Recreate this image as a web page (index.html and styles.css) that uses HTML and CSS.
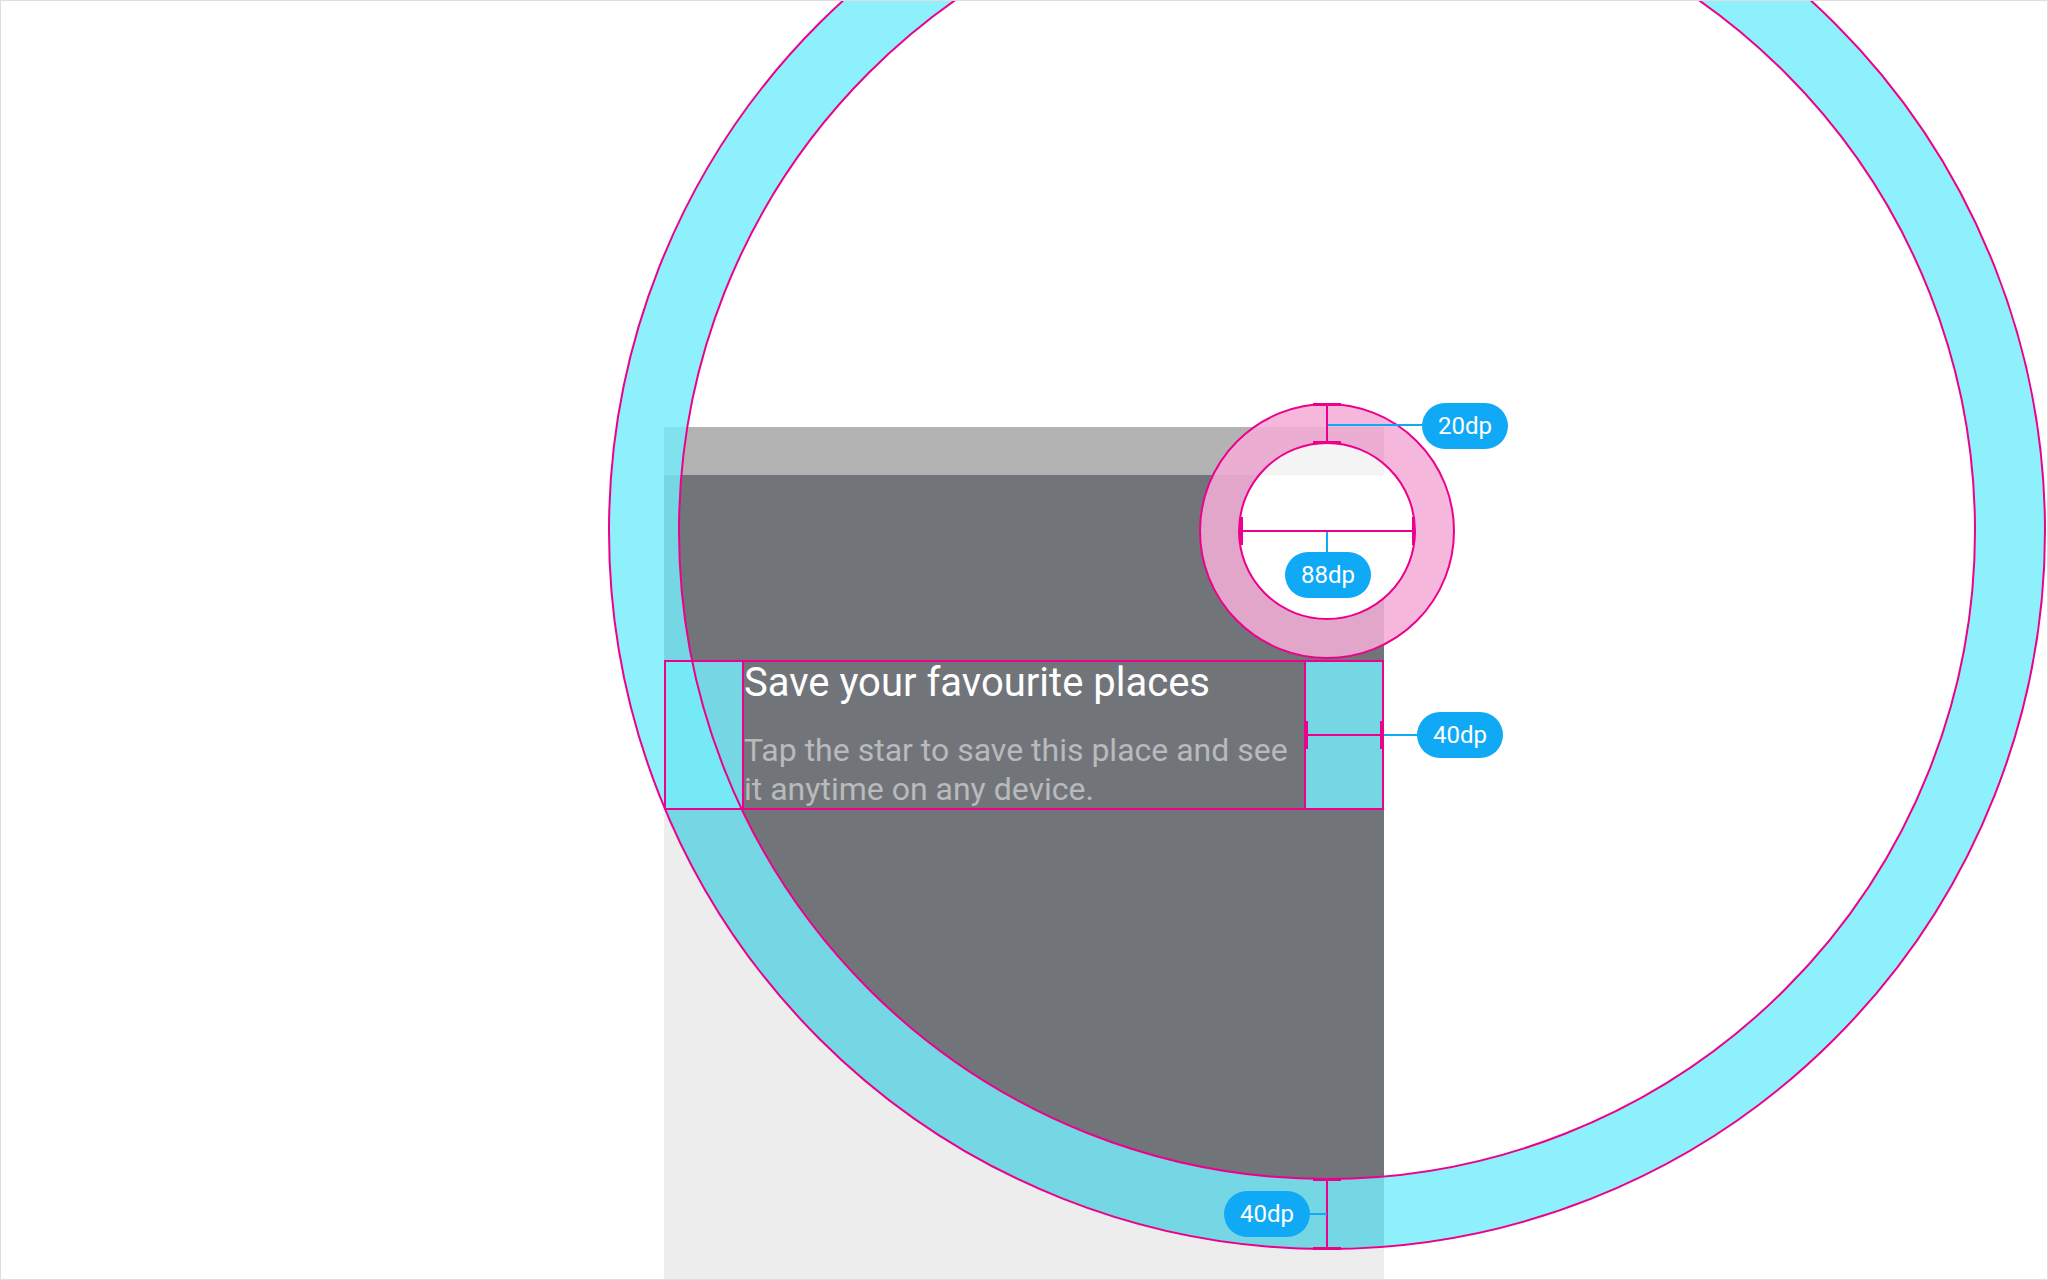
FILE: index.html
```html
<!DOCTYPE html>
<html>
<head>
    <title>Feature discovery - measurements</title>
    <link rel="stylesheet" href="styles.css">
</head>
<body>
    <div class="canvas">
        <div class="phone">
            <div class="status-bar"></div>
            <div class="coach">
                <h2 class="coach-title">Save your favourite places</h2>
                <p class="coach-body">Tap the star to save this place and see it anytime on any device.</p>
            </div>
        </div>

        <svg class="diagram" width="2048" height="1280" viewBox="0 0 2048 1280">
            <defs>
                <clipPath id="screenBody">
                    <rect x="664" y="475" width="720" height="805"/>
                </clipPath>
                <clipPath id="statusInTarget">
                    <circle cx="1327" cy="531" r="88"/>
                </clipPath>
            </defs>

            <!-- scrim / outer circle on the screen -->
            <circle cx="1327" cy="531" r="718" fill="#717579" clip-path="url(#screenBody)"/>

            <!-- target -->
            <circle cx="1327" cy="531" r="88" fill="#fff"/>
            <rect x="1239" y="427" width="145" height="48" fill="#f4f4f4" clip-path="url(#statusInTarget)"/>

            <!-- 40dp padding ring -->
            <path fill="rgba(117,237,250,0.82)" fill-rule="evenodd"
                d="M609 531a718 718 0 1 0 1436 0a718 718 0 1 0 -1436 0Z M679 531a648 648 0 1 0 1296 0a648 648 0 1 0 -1296 0Z"/>
            <!-- 20dp target ring -->
            <path fill="rgba(244,173,215,0.87)" fill-rule="evenodd"
                d="M1200 531a127 127 0 1 0 254 0a127 127 0 1 0 -254 0Z M1239 531a88 88 0 1 0 176 0a88 88 0 1 0 -176 0Z"/>

            <!-- text padding boxes -->
            <rect x="664" y="660" width="80" height="150" fill="rgba(117,237,250,0.82)"/>
            <rect x="1304" y="660" width="80" height="150" fill="rgba(117,237,250,0.82)"/>

            <g fill="none" stroke="#ec008c" stroke-width="2">
                <circle cx="1327" cy="531" r="718"/>
                <circle cx="1327" cy="531" r="648"/>
                <circle cx="1327" cy="531" r="127"/>
                <circle cx="1327" cy="531" r="88"/>
                <rect x="665" y="661" width="718" height="148"/>
                <line x1="743" y1="660" x2="743" y2="810"/>
                <line x1="1305" y1="660" x2="1305" y2="810"/>

                <line x1="1327" y1="405" x2="1327" y2="443"/>
                <line x1="1240" y1="531" x2="1414" y2="531"/>
                <line x1="1305" y1="735" x2="1383" y2="735"/>
                <line x1="1327" y1="1179" x2="1327" y2="1248"/>
            </g>

            <!-- end caps -->
            <g fill="#ec008c">
                <rect x="1313" y="403" width="28" height="3"/>
                <rect x="1313" y="441" width="28" height="3"/>
                <rect x="1240" y="517" width="3" height="28"/>
                <rect x="1412" y="517" width="3" height="28"/>
                <rect x="1305" y="721" width="3" height="28"/>
                <rect x="1380" y="721" width="3" height="28"/>
                <rect x="1313" y="1178" width="28" height="3"/>
                <rect x="1313" y="1247" width="28" height="3"/>
            </g>

            <g stroke="#10a9f6" stroke-width="2">
                <line x1="1328" y1="425" x2="1424" y2="425"/>
                <line x1="1327" y1="532" x2="1327" y2="554"/>
                <line x1="1384" y1="735" x2="1419" y2="735"/>
                <line x1="1307" y1="1214" x2="1327" y2="1214"/>
            </g>
        </svg>

        <span class="tag tag-ring">20dp</span>
        <span class="tag tag-target">88dp</span>
        <span class="tag tag-side">40dp</span>
        <span class="tag tag-bottom">40dp</span>
    </div>
</body>
</html>
```

FILE: styles.css
```css
body {
    margin: 0;
    background-color: #fff;
    font-family: Roboto, 'Noto Sans', sans-serif;
}
.canvas {
    position: relative;
    width: 2048px;
    height: 1280px;
    padding-top: 427px;
    box-sizing: border-box;
    overflow: hidden;
    background: #fff;
}
.canvas::after {
    content: '';
    position: absolute;
    top: 0;
    left: 0;
    right: 0;
    bottom: 0;
    border: 1px solid #dedede;
    z-index: 5;
    pointer-events: none;
}
.phone {
    width: 720px;
    height: 853px;
    margin-left: 664px;
    background-color: #ededed;
}
.status-bar {
    height: 48px;
    background-color: #b3b3b3;
}
.coach {
    position: relative;
    z-index: 2;
    height: 150px;
    margin-top: 185px;
    padding: 0 80px;
    box-sizing: border-box;
}
.coach-title {
    margin: 0;
    font-size: 40px;
    line-height: 46px;
    font-weight: 400;
    color: #fff;
}
.coach-body {
    margin: 25px 0 0;
    font-size: 32px;
    line-height: 39px;
    color: rgba(255, 255, 255, 0.5);
}
.diagram {
    position: absolute;
    top: 0;
    left: 0;
    z-index: 1;
}
.tag {
    position: absolute;
    z-index: 3;
    width: 86px;
    height: 46px;
    border-radius: 23px;
    background-color: #10a9f6;
    color: #fff;
    font-size: 24px;
    line-height: 46px;
    text-align: center;
}
.tag-ring {
    left: 1422px;
    top: 403px;
}
.tag-target {
    left: 1285px;
    top: 552px;
}
.tag-side {
    left: 1417px;
    top: 712px;
}
.tag-bottom {
    left: 1224px;
    top: 1191px;
}
```
